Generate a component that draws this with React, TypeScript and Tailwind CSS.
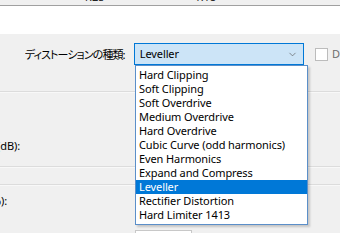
import { ChevronDown } from 'lucide-react'

const OPTIONS = [
  'Hard Clipping',
  'Soft Clipping',
  'Soft Overdrive',
  'Medium Overdrive',
  'Hard Overdrive',
  'Cubic Curve (odd harmonics)',
  'Even Harmonics',
  'Expand and Compress',
  'Leveller',
  'Rectifier Distortion',
  'Hard Limiter 1413',
]

const SELECTED = 'Leveller'

function Separator() {
  return (
    <div className="flex flex-col">
      <div className="h-px bg-[#dcdcdc]" />
      <div className="h-px bg-[#f8f8f8]" />
    </div>
  )
}

function EdgeLabel({ text, width }: { text: string; width: string }) {
  return <div className={`flex justify-end whitespace-nowrap ${width}`}>{text}</div>
}

export default function App() {
  return (
    <div className="relative h-[233px] w-[340px] overflow-hidden bg-[#f0f0f0] font-['Noto_Sans','Noto_Sans_CJK_JP',sans-serif] text-[11px] leading-[14px] tracking-[-0.1px] text-black">
      {/* bottom edge of the area above */}
      <div className="h-[6px] overflow-hidden border-b border-[#a0a0a0] bg-[#f0f0f0]">
        <div className="-mt-[10px] flex text-[#222]">
          <span className="ml-[83px]">1.25</span>
          <span className="ml-[90px]">1.18</span>
        </div>
      </div>
      <div className="h-[28px] bg-white" />

      {/* distortion type row */}
      <div className="flex h-[57px] items-start pt-[9px]">
        <div className="flex h-[22px] w-[126px] items-center justify-end whitespace-nowrap font-['Noto_Sans_CJK_JP',sans-serif] text-[11px] tracking-[-0.9px] [font-feature-settings:'palt']">
          ディストーションの種類:
        </div>
        <div className="ml-[9px] flex h-[22px] w-[172px] items-center justify-between border border-[#0078d7] bg-[#cce4f7] pl-[5px] pr-[5px]">
          <span>{SELECTED}</span>
          <ChevronDown size={11} strokeWidth={1.4} className="text-[#555]" />
        </div>
        <div className="ml-[11px] mt-[5px] h-[13px] w-[13px] border border-[#bcbcbc] bg-white" />
        <span className="ml-[4px] mt-[4px] text-[#6d6d6d]">D</span>
      </div>
      <Separator />

      {/* gain row */}
      <div className="flex h-[73px] items-start pt-[46px]">
        <EdgeLabel text="出力 (dB):" width="w-[20px]" />
      </div>
      <Separator />
      <div className="h-[16px]" />
      <Separator />

      {/* next row */}
      <div className="flex h-[22px] items-end">
        <EdgeLabel text="(%):" width="w-[7px]" />
      </div>
      <div className="ml-[135px] mt-[22px] h-[10px] w-[57px] border border-[#c8c8c8] bg-white" />

      {/* open dropdown list */}
      <div className="absolute left-[135px] top-[65px] w-[173px] border border-[#5b8fc9] bg-white py-[2px] shadow-[2px_2px_2px_rgba(0,0,0,0.18)]">
        {OPTIONS.map(o => (
          <div
            key={o}
            className={
              o === SELECTED
                ? 'flex h-[14px] items-center whitespace-nowrap bg-[#0078d7] pl-[3px] text-white'
                : 'flex h-[14px] items-center whitespace-nowrap pl-[3px]'
            }
          >
            {o}
          </div>
        ))}
      </div>
    </div>
  )
}
